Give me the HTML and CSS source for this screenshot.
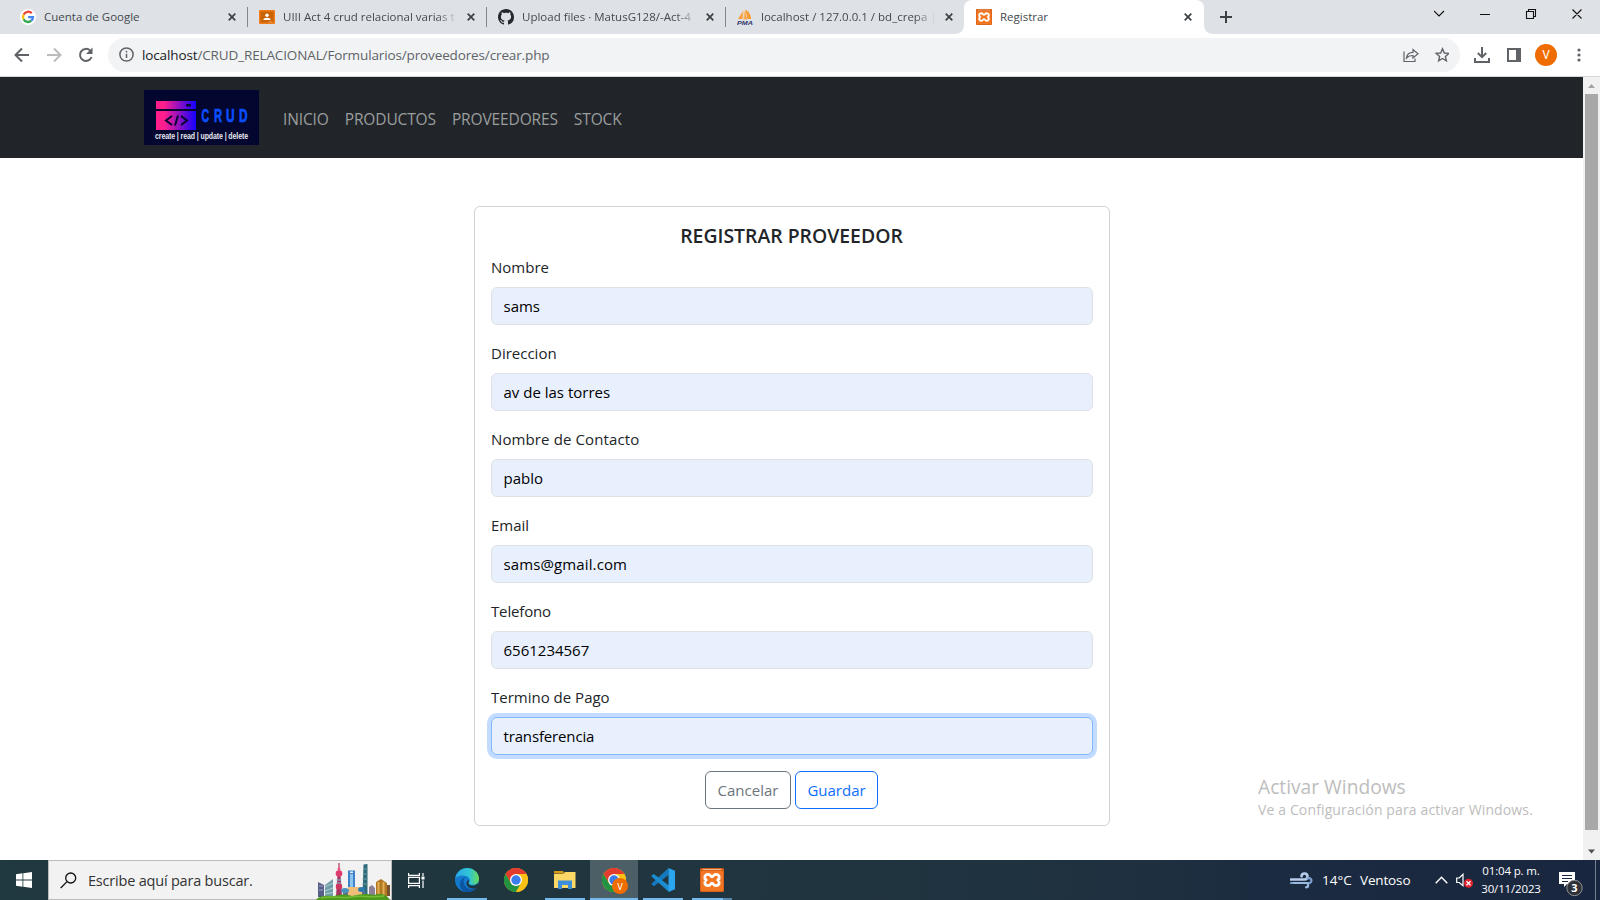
FILE: index.html
```html
<!DOCTYPE html>
<html lang="es">
<head>
<meta charset="utf-8">
<title>Registrar</title>
<link rel="stylesheet" href="styles.css">
</head>
<body>
<svg class="defs" width="0" height="0">
  <defs>
    <symbol id="x" viewBox="0 0 8 8"><path d="M.7.7l6.6 6.6M7.3.7L.7 7.3" stroke="#3c4043" stroke-width="1.7" fill="none"/></symbol>
    <symbol id="chrome" viewBox="0 0 24 24">
      <circle cx="12" cy="12" r="12" fill="#fbc116"/>
      <path d="M12 6h10.4A12 12 0 0 0 1.6 6L6.8 15z" fill="#e33b2e"/>
      <path d="M1.6 6A12 12 0 0 0 12 24l5.2-9-5.2 3-5.2-3z" fill="#229342"/>
      <path d="M12 6h10.4A12 12 0 0 1 12 24l5.2-9z" fill="#fbc116"/>
      <circle cx="12" cy="12" r="6" fill="#fff"/><circle cx="12" cy="12" r="4.7" fill="#3b7ded"/>
    </symbol>
    <symbol id="xampp" viewBox="0 0 24 24">
      <rect width="24" height="24" rx="1.5" fill="#d9601a"/><rect x="1" y="3" width="22" height="20" rx="1" fill="#f37623"/><path d="M3 1.500h18" stroke="#f7b58b"/>
      <path d="M8.300 6.300c-3.800 0-4.600 3.500-2.300 5.700-2.300 2.200-1.500 5.700 2.300 5.700 2.300 0 2.200-2.500 3.700-2.500s1.400 2.500 3.700 2.500c3.800 0 4.600-3.500 2.300-5.700 2.300-2.200 1.500-5.700-2.300-5.700-2.300 0-2.200 2.500-3.700 2.500s-1.400-2.500-3.700-2.500z" fill="none" stroke="#fff" stroke-width="2.800"/>
    </symbol>
  </defs>
</svg>

<header class="tabs">
  <div class="tab first">
    <svg class="fav" viewBox="0 0 16 16"><circle cx="8" cy="8" r="8" fill="#fff"/><g fill="none" stroke-width="2.300"><path d="M11.800 4.300A5 5 0 0 0 3.600 5.600" stroke="#ea4335"/><path d="M3.600 5.600a5 5 0 0 0 0 4.800" stroke="#fbbc05"/><path d="M3.600 10.400a5 5 0 0 0 7.700 1.300" stroke="#34a853"/><path d="M11.300 11.700A5 5 0 0 0 13 8.100H8.200" stroke="#4285f4"/></g></svg>
    <span class="title">Cuenta de Google</span><svg class="close"><use href="#x"/></svg>
  </div>
  <div class="tab">
    <svg class="fav" viewBox="0 0 16 16"><rect y="1" width="16" height="14" rx="1" fill="#ef7c18"/><rect x="1.500" y="2.500" width="13" height="11" fill="#c96404"/><circle cx="8" cy="6.200" r="1.700" fill="#fff"/><path d="M4.300 11c0-3 7.400-3 7.400 0z" fill="#fff"/><path d="M9.500 13h4" stroke="#f3a35c"/></svg>
    <span class="title fade">UIII Act 4 crud relacional varias t</span><svg class="close"><use href="#x"/></svg>
  </div>
  <div class="tab">
    <svg class="fav" viewBox="0 0 16 16"><path fill="#24292f" d="M8 0C3.580 0 0 3.580 0 8c0 3.540 2.290 6.530 5.470 7.590.4.070.55-.17.55-.38 0-.19-.01-.82-.01-1.490-2.010.37-2.530-.49-2.690-.94-.09-.23-.48-.94-.82-1.130-.28-.15-.68-.52-.01-.53.63-.01 1.080.58 1.230.82.72 1.210 1.870.87 2.330.66.07-.52.28-.87.51-1.070-1.780-.2-3.640-.89-3.640-3.950 0-.87.31-1.590.82-2.150-.08-.2-.36-1.020.08-2.120 0 0 .67-.21 2.200.82.64-.18 1.320-.27 2-.27s1.360.09 2 .27c1.530-1.040 2.200-.82 2.200-.82.44 1.100.16 1.920.08 2.120.51.56.82 1.270.82 2.150 0 3.070-1.870 3.750-3.650 3.950.29.25.54.73.54 1.480 0 1.070-.01 1.930-.01 2.200 0 .21.15.46.55.38A8.010 8.010 0 0 0 16 8c0-4.420-3.580-8-8-8z"/></svg>
    <span class="title fade">Upload files · MatusG128/-Act-4</span><svg class="close"><use href="#x"/></svg>
  </div>
  <div class="tab last">
    <svg class="fav" viewBox="0 0 16 16"><path d="M6 2L1 10h4.500zM8 .5L6.500 10.500H10z" fill="#f9a03c"/><path d="M8.500.5c4 2.500 5.500 6 5.500 9.500h-3.500z" fill="#f89c2e"/><path d="M7 1v9.500" stroke="#fbc98c"/><text x="0" y="15.500" class="pma" textLength="16" lengthAdjust="spacingAndGlyphs">PMA</text></svg>
    <span class="title fade">localhost / 127.0.0.1 / bd_crepa |</span><svg class="close"><use href="#x"/></svg>
  </div>
  <div class="tab active">
    <svg class="fav"><use href="#xampp"/></svg>
    <span class="title">Registrar</span><svg class="close"><use href="#x"/></svg>
  </div>
  <svg class="plus" viewBox="0 0 12 12"><path d="M6 0v12M0 6h12" stroke="#3c4043" stroke-width="2"/></svg>
  <svg class="winctl" width="150" height="10" viewBox="0 0 150 10" fill="none" stroke="#111" stroke-width="1.100"><path d="M0 2l5 5 5-5M46 5.500h10M92.500 2.500h7v7h-7zM94.500 2.500v-2h7v7h-2M138.500 .5l9 9M147.500 .5l-9 9"/></svg>
</header>

<div class="toolbar">
  <svg class="navbtns" width="82" height="20" viewBox="0 0 82 20" fill="none" stroke="#5f6368" stroke-width="2"><path d="M15 10H2M8 3.500L1.500 10 8 16.500"/><path d="M33 10h13M40 3.500l6.500 6.500-6.500 6.500" stroke="#babcbe"/><path d="M76.200 5.600A6 6 0 1 0 77.600 12"/><path d="M78.500 2.500v6.500H72z" fill="#5f6368" stroke="none"/></svg>
  <div class="omnibox">
    <svg width="15" height="15" viewBox="0 0 15 15" fill="none" stroke="#5f6368" stroke-width="1.500"><circle cx="7.500" cy="7.500" r="6.600"/><path d="M7.500 6.700v4.300M7.500 3.800v1.700"/></svg>
    <span class="url"><b>localhost</b>/CRUD_RELACIONAL/Formularios/proveedores/crear.php</span>
    <svg class="share" width="46" height="16" viewBox="0 0 46 16" fill="none" stroke="#5f6368" stroke-width="1.200"><path d="M1 4.500v10h11v-3M3.500 11c.5-4 3-5.700 6.500-5.700V2.500l5 4.300-5 4.200V8.500c-3 0-5 .7-6.500 2.500z"/><path d="M39.500 1.800l1.800 4.200 4.500.4-3.400 3 1 4.400-3.900-2.300-3.900 2.300 1-4.400-3.400-3 4.500-.4z" stroke-width="1.400"/></svg>
  </div>
  <svg class="down" width="48" height="18" viewBox="0 0 48 18" fill="none" stroke="#5f6368" stroke-width="2"><path d="M8 1v10M3.800 7L8 11.200 12.200 7M1 12v4h14v-4"/><path d="M34 3h12v12H34z"/><path d="M42 2h5v14h-5z" fill="#5f6368" stroke="none"/></svg>
  <span class="avatar">V</span>
  <svg class="dots" width="4" height="14" viewBox="0 0 4 14" fill="#5f6368"><circle cx="2" cy="2" r="1.600"/><circle cx="2" cy="7" r="1.600"/><circle cx="2" cy="12" r="1.600"/></svg>
</div>

<div class="viewport">
  <div class="page">
    <nav class="navbar">
      <svg class="logo" width="115" height="55" viewBox="0 0 115 55">
        <defs><linearGradient id="lg" gradientUnits="userSpaceOnUse" x1="12" x2="52" y1="0" y2="0"><stop offset=".2" stop-color="#ff1e8c"/><stop offset="1" stop-color="#1400ff"/></linearGradient></defs>
        <rect width="115" height="55" fill="#03062e"/>
        <path d="M12 11h40v8H12zM12 21h40v19H12z" fill="url(#lg)"/>
        <rect x="42" y="14" width="5" height="2.500" rx="1" fill="#03062e"/>
        <path d="M28 26l-6 4.500 6 4.500M37 26l6 4.500-6 4.500M34 25.500l-3 10" fill="none" stroke="#03062e" stroke-width="2"/>
        <g class="lt"><text x="57.500" y="31.500" textLength="7.500" lengthAdjust="spacingAndGlyphs">C</text><text x="70" y="31.500" textLength="8" lengthAdjust="spacingAndGlyphs">R</text><text x="82" y="31.500" textLength="8.500" lengthAdjust="spacingAndGlyphs">U</text><text x="95" y="31.500" textLength="8.500" lengthAdjust="spacingAndGlyphs">D</text></g>
        <text x="11" y="48.500" class="ls" textLength="93" lengthAdjust="spacingAndGlyphs">create | read | update | delete</text>
      </svg>
      <a class="n1">INICIO</a><a>PRODUCTOS</a><a>PROVEEDORES</a><a>STOCK</a>
    </nav>
    <main class="card">
      <h5>REGISTRAR PROVEEDOR</h5>
      <label>Nombre</label><div class="input">sams</div>
      <label>Direccion</label><div class="input">av de las torres</div>
      <label class="wide">Nombre de Contacto</label><div class="input">pablo</div>
      <label>Email</label><div class="input wide">sams@gmail.com</div>
      <label class="tight">Telefono</label><div class="input">6561234567</div>
      <label>Termino de Pago</label><div class="input focus tight">transferencia</div>
      <div class="actions"><button class="btn cancel">Cancelar</button><button class="btn save">Guardar</button></div>
    </main>
    <div class="watermark"><p class="w1">Activar Windows</p><p class="w2">Ve a Configuración para activar Windows.</p></div>
  </div>
  <div class="scroll">
    <svg width="17" height="17" viewBox="0 0 17 17"><path d="M5 11l3.500-4 3.500 4z" fill="#a3a3a3"/></svg>
    <div class="thumb"></div>
    <svg width="17" height="17" viewBox="0 0 17 17"><path d="M5 6.500l3.500 4 3.500-4z" fill="#505050"/></svg>
  </div>
</div>

<footer class="taskbar">
  <div class="start"><svg width="16" height="16" viewBox="0 0 16 16" fill="#fff"><path d="M0 2.200L6.500 1.300v6.200H0zM7.300 1.200L16 0v7.500H7.300zM0 8.400h6.500v6.300L0 13.800zM7.300 8.400H16V16l-8.700-1.200z"/></svg></div>
  <div class="search">
    <svg width="17" height="17" viewBox="0 0 17 17" fill="none" stroke="#111" stroke-width="1.300"><circle cx="10.700" cy="6" r="5"/><path d="M7 9.600L.7 16"/></svg>
    <span class="ph">Escribe aquí para buscar.</span>
    <svg class="city" width="75" height="38" viewBox="0 0 75 38">
      <path d="M2 20l6 3v12H2z" fill="#565f8a"/><path d="M3 24h4M3 28h4" stroke="#a3a3bd"/><path d="M9 23l8-6v18H9z" fill="#6f9fa9"/><path d="M9 25l8-4M9 29l8-3M9 32l8-1.500" stroke="#b5cfd0"/>
      <path d="M23 1v12" stroke="#b83159" stroke-width="1.200"/><path d="M21.500 13h3l1.500 21h-6z" fill="#a23660"/><circle cx="23" cy="11.500" r="3.300" fill="#df3b6f"/><circle cx="23" cy="7" r="1.500" fill="#e65782"/><circle cx="23" cy="24.500" r="3.200" fill="#cf345e"/><path d="M20.500 18h5M20.500 21h5" stroke="#79c4d8"/>
      <path d="M32 8.500h7v18h-7z" fill="#3e82cb"/><path d="M34 12h3v13h-3z" fill="#8cc5ee"/><path d="M34 9.500h3v1.500h-3z" fill="#f2f2f2"/>
      <path d="M47.500 2.500l4-.5v32h-5z" fill="#2f6b7b"/><path d="M47 7h4.500M47 12h4.500M46.500 17h5M46.500 22h5" stroke="#6d9da4"/>
      <path d="M53 25l3-2 3 3v8h-6z" fill="#8c8194"/><path d="M60 20l5-3 6 4v14H60z" fill="#b27824"/><path d="M62.500 20v14M67.500 20v14" stroke="#e0b052" stroke-width="2"/><path d="M71 23h3v11h-3z" fill="#77532d"/>
      <path d="M27 28h22v7H27z" fill="#5d7385"/><path d="M32 25h14v10H32z" fill="#f2bd78"/><ellipse cx="29" cy="28.500" rx="4" ry="2.500" fill="#4a92bd"/><ellipse cx="45.500" cy="27.500" rx="3.500" ry="2.500" fill="#2c7bb0"/>
      <path d="M0 38c2-4 9-5 18-4 7-2 12-2 18 0 8-2 15-3 22-1 7-2 12-1 16 5z" fill="#4d9a20"/><path d="M5 36c12-3 20 1 30-1s20 1 33-1" fill="none" stroke="#78bd31" stroke-width="1.500"/>
    </svg>
  </div>
  <div class="app tv"><svg width="18" height="17" viewBox="0 0 18 17" fill="none" stroke="#fff" stroke-width="1.200"><path d="M.6 1v2.400h10.800V1M.6 16v-2.400h10.800V16M.6 5.400h10.800v6H.6zM15 1v3M15 8.500V16"/><path d="M13.500 4.500h3v3h-3z" fill="#fff" stroke="none"/></svg></div>
  <div class="app on"><svg width="24" height="24" viewBox="0 0 24 24">
    <defs><linearGradient id="e1"><stop stop-color="#2aa7e8"/><stop offset=".6" stop-color="#31c5d4"/><stop offset="1" stop-color="#6bdb55"/></linearGradient></defs>
    <circle cx="12" cy="12" r="12" fill="#1379cc"/><path d="M.3 10.500C1.500 4 6.500 0 12 0c7 0 12 5 12 10.700 0 4-3 6-6.300 6-3.500 0-4.600-1.500-3.400-3 .9-1.500.4-4.500-3.300-5.700C7 6.800 2.500 7.500.3 10.500z" fill="url(#e1)"/><path d="M8.500 13c0 5.500 4.500 8.200 8.500 8.200 2.400 0 4.200-.7 5.300-1.800C20 22.500 16 24 12.500 24 7 23.500 4.500 19.500 5 15.500 5.400 12 8 9.500 11 9c-1.500 1-2.500 2-2.500 4z" fill="#0c55a3"/><path d="M13.500 14.500c-.6 2 1 3.300 4 3.300 2 0 4-.8 5.500-2.500 1 1.500.3 3.500-1.700 4.800-3.300 1.300-7.800.4-9.500-3-.8-2-.1-4 1.700-5 1 .6.700 1.500 0 2.400z" fill="#20343e"/></svg></div>
  <div class="app"><svg width="24" height="24"><use href="#chrome"/></svg></div>
  <div class="app on"><svg width="22" height="20" viewBox="0 0 22 20"><path d="M0 1h9l1.500 2.500H0z" fill="#d89b16"/><path d="M0 4l9.500-.2L11 2h10.500v16H0z" fill="#fbd766"/><path d="M4 10.500h14V19h-4v-4H8v4H4z" fill="#3c8fd8"/></svg></div>
  <div class="app on current"><svg width="26" height="26" viewBox="0 0 26 26"><use href="#chrome" width="24" height="24"/><circle cx="18" cy="18" r="8" fill="#ef6c00"/><text x="18" y="21.700" text-anchor="middle" class="v">V</text></svg></div>
  <div class="app on"><svg width="24" height="24" viewBox="0 0 24 24"><path d="M17.500 0v7L3 18.300.2 16z" fill="#1479bd"/><path d="M0 8l2.800-2L18 17.500V24z" fill="#1c8cd1"/><path d="M17.500 0L24 2.700v18.500L17.500 24z" fill="#2aa5ee"/></svg></div>
  <div class="app on multi"><svg width="24" height="24"><use href="#xampp"/></svg></div>
  <div class="tray">
    <svg width="24" height="17" viewBox="0 0 24 17" fill="none" stroke-linecap="round"><path d="M1 7.500h13.500a3 3 0 1 0-3-3.200" stroke="#b7cbea" stroke-width="2.600"/><path d="M1 11h18.500a2.500 2.500 0 1 0-2-4.500" stroke="#7b9fce" stroke-width="2.200"/><path d="M4 11h12a2 2 0 0 1 0 4.300" stroke="#9bb8df" stroke-width="2.200"/></svg>
    <span class="temp">14°C</span><span class="wind">Ventoso</span>
    <svg class="chev" width="13" height="8" viewBox="0 0 13 8" fill="none" stroke="#fff" stroke-width="1.400"><path d="M.7 7.200l5.800-6 5.800 6"/></svg>
    <svg class="spk" width="18" height="15" viewBox="0 0 18 15" fill="none" stroke="#fff"><path d="M.7 5h2.500L7 1.300v11.400L3.200 9.500H.7z" stroke-width="1.200"/><circle cx="12.500" cy="10.300" r="4.500" fill="#e0232e" stroke="none"/><path d="M10.500 8.300l4 4M14.500 8.300l-4 4" stroke-width="1.300"/></svg>
    <div class="clock"><span>01:04 p. m.</span><span>30/11/2023</span></div>
    <svg class="notif" width="25" height="26" viewBox="0 0 25 26"><path d="M0 1h16v12H8l-3 3v-3H0z" fill="#fff"/><path d="M3 4.500h10M3 7.500h10M3 10.500h6" stroke="#1b2740"/><circle cx="15.500" cy="17" r="7.700" fill="#2e3236" stroke="#8b9096"/><text x="15.500" y="21" text-anchor="middle" class="three">3</text></svg>
  </div>
</footer>
</body>
</html>
```
FILE: styles.css
```css
* { box-sizing: border-box; }
body { margin: 0; width: 1600px; height: 900px; overflow: hidden; display: flex; flex-direction: column; background: #fff; font-family: "Open Sans", "Noto Sans", sans-serif; font-size: 15px; color: #212529; white-space: nowrap; }
svg { flex: none; display: block; }
.defs { position: absolute; }

.tabs { height: 34px; flex: none; background: #dee1e6; display: flex; align-items: flex-start; }
.tab { width: 239px; height: 34px; flex: none; display: flex; align-items: center; padding: 0 11px; position: relative; font-size: 11.5px; color: #45494d; }
.tab.first { width: 248px; padding-left: 20px; }
.tab:not(.active):not(.last)::after { content: ""; position: absolute; right: 0; top: 7px; width: 1px; height: 20px; background: #84878b; }
.tab.last { width: 238px; border-radius: 0 0 8px 0; }
.tab.active { width: 240px; padding: 0 12px; background: #fff; border-radius: 8px 8px 0 0; }
.tab.active::before, .tab.active::after { content: ""; position: absolute; bottom: 0; width: 8px; height: 8px; }
.tab.active::before { left: -8px; background: radial-gradient(circle at 0 0, transparent 7.5px, #fff 8px); }
.tab.active::after { right: -8px; background: radial-gradient(circle at 100% 0, transparent 7.5px, #fff 8px); }
.fav { width: 16px; height: 16px; margin-right: 8px; }
.title { width: 173px; line-height: 20px; }
.fade { -webkit-mask-image: linear-gradient(90deg, #000 89%, transparent 101%); mask-image: linear-gradient(90deg, #000 89%, transparent 101%); }
.close { width: 8px; height: 8px; margin-left: auto; margin-right: 1px; }
.last .close { margin-right: 0; }
.active .close { margin-right: 0; }
.pma { font: italic bold 6px "Liberation Sans", sans-serif; fill: #313570; }
.plus { width: 12px; height: 12px; margin: 11px 0 0 16px; }
.winctl { margin: 9px 16px 0 auto; }

.toolbar { height: 43px; flex: none; display: flex; align-items: center; padding-bottom: 1px; border-bottom: 1px solid #d5d7da; }
.navbtns { margin-left: 14px; margin-right: 12px; }
.omnibox { width: 1352px; height: 34px; border-radius: 17px; background: #f1f3f4; display: flex; align-items: center; padding: 0 11px; }
.url { margin-left: 8px; font-size: 13.5px; letter-spacing: -0.13px; color: #5f6368; }
.url b { font-weight: 400; color: #202124; }
.share { margin-left: auto; }
.down { margin-left: 14px; }
.avatar { width: 22px; height: 22px; border-radius: 50%; background: #ef6c00; color: #fff; font: 12px/22px Roboto, sans-serif; text-align: center; margin-left: 13px; }
.dots { margin-left: 20px; }

.viewport { height: 783px; flex: none; display: flex; }
.page { width: 1583px; position: relative; }
.navbar { height: 81px; background: #212529; display: flex; align-items: center; padding-left: 144px; color: #9b9d9e; font-size: 15.5px; letter-spacing: -0.13px; }
.navbar a { margin-left: 16px; padding-top: 2px; }
.navbar .n1 { margin-left: 24px; }
.lt { font: bold 19px "Liberation Sans Narrow", "Liberation Sans", sans-serif; fill: #0b4fff; stroke: #0b4fff; stroke-width: .7px; }
.ls { font: bold 9px "Liberation Sans", sans-serif; fill: #e8e8f0; }
.card { width: 636px; margin: 48px 0 0 474px; height: 620px; border: 1px solid #d3d3d4; border-radius: 6px; padding: 16px; }
.card h5 { margin: 0 0 8px; font-size: 19.4px; font-weight: 600; line-height: 26px; height: 24px; text-align: center; padding-right: 1px; }
.card label { display: block; height: 24px; line-height: 24px; margin-bottom: 8px; }
.card .wide { letter-spacing: 0.12px; }
.card .tight { letter-spacing: -0.15px; }
.input { height: 38px; line-height: 36px; margin-bottom: 16px; padding: 0 11.5px; border: 1px solid #dee2e6; border-radius: 6px; background: #e8f0fe; color: #000; }
.input.focus { border-color: #86b7fe; box-shadow: 0 0 0 4px #c2dbfe; }
.actions { display: flex; justify-content: center; gap: 4px; padding-right: 2px; }
.btn { height: 38px; padding: 0 0 0 1px; background: #fff; border: 1px solid; border-radius: 6px; font: inherit; }
.cancel { width: 86px; color: #6c757d; }
.save { width: 83px; color: #0d6efd; }
.watermark { position: absolute; left: 1258px; top: 696px; color: #bdbdbd; }
.watermark p { margin: 0; }
.w1 { font-size: 19.2px; line-height: 27px; }
.w2 { font-size: 14px; line-height: 19px; letter-spacing: 0.13px; }
.scroll { width: 17px; background: #f1f1f1; display: flex; flex-direction: column; }
.thumb { width: 13px; height: 736px; margin: 0 2px auto; background: #a8a8a8; }

.taskbar { height: 40px; flex: none; display: flex; background: linear-gradient(90deg, #20383f 0, #20353f 45%, #1f3140 70%, #1b2b40 80%, #19263f 100%); color: #fff; }
.start { width: 48px; display: flex; align-items: center; justify-content: center; }
.search { width: 344px; background: #f2f2f2; border: 1px solid #bbb; display: flex; align-items: center; padding-left: 11px; color: #333; }
.ph { margin-left: 11px; width: 228px; font-size: 14.5px; letter-spacing: -0.2px; }
.city { margin-top: 1px; }
.app { width: 48px; display: flex; align-items: center; justify-content: center; margin-right: 1px; position: relative; }
.tv { margin-right: 3px; }
.tv svg { margin-left: 1px; }
.on::after { content: ""; position: absolute; left: 4px; right: 4px; bottom: 0; height: 2px; background: #76b9ed; }
.current { background: #4c5e66; }
.current svg { margin: 2px 0 0 2px; }
.current::after { left: 0; right: 0; }
.multi::after { background: linear-gradient(90deg, #76b9ed 31px, #5585aa 31px); }
.v { font: 9px Roboto, sans-serif; fill: #fff; }
.tray { margin-left: auto; display: flex; align-items: center; border-right: 1px solid #76808e; margin-right: 4px; width: 306px; font-size: 13.5px; }
.temp { margin-left: 8px; width: 30px; }
.wind { margin-left: 8px; width: 50px; letter-spacing: -0.15px; }
.chev { margin-left: 25px; }
.spk { margin-left: 8px; }
.clock { width: 58px; margin-left: 8px; margin-right: 2px; display: flex; flex-direction: column; align-items: center; font-size: 11.5px; letter-spacing: -0.15px; line-height: 18px; }
.notif { margin-left: 17px; margin-top: 7px; }
.three { font: bold 11px "Open Sans", sans-serif; fill: #fff; }
```
